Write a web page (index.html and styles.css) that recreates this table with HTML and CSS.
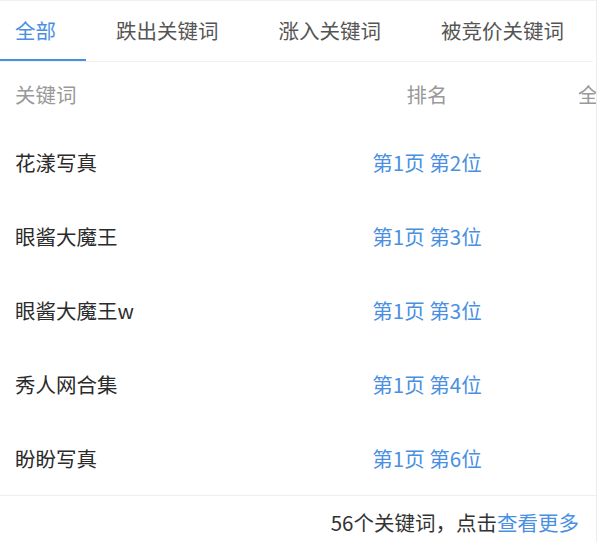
FILE: index.html
```html
<!DOCTYPE html>
<html lang="zh-CN">
<head>
    <meta charset="UTF-8">
    <title>关键词排名</title>
    <link rel="stylesheet" href="styles.css">
</head>
<body>
    <div class="panel">
        <div class="tabs">
            <div class="tab active">全部</div>
            <div class="tab">跌出关键词</div>
            <div class="tab">涨入关键词</div>
            <div class="tab">被竞价关键词</div>
        </div>

        <div class="table">
            <div class="row head">
                <div class="cell kw">关键词</div>
                <div class="cell rank">排名</div>
                <div class="cell extra">全网指数</div>
            </div>
            <div class="row">
                <div class="cell kw">花漾写真</div>
                <div class="cell rank link">第1页 第2位</div>
                <div class="cell extra"></div>
            </div>
            <div class="row">
                <div class="cell kw">眼酱大魔王</div>
                <div class="cell rank link">第1页 第3位</div>
                <div class="cell extra"></div>
            </div>
            <div class="row">
                <div class="cell kw">眼酱大魔王w</div>
                <div class="cell rank link">第1页 第3位</div>
                <div class="cell extra"></div>
            </div>
            <div class="row">
                <div class="cell kw">秀人网合集</div>
                <div class="cell rank link">第1页 第4位</div>
                <div class="cell extra"></div>
            </div>
            <div class="row">
                <div class="cell kw">盼盼写真</div>
                <div class="cell rank link">第1页 第6位</div>
                <div class="cell extra"></div>
            </div>
        </div>

        <div class="footer">
            56个关键词，点击<a class="more" href="#">查看更多</a>
        </div>
    </div>
</body>
</html>
```

FILE: styles.css
```css
* {
    margin: 0;
    padding: 0;
    box-sizing: border-box;
}

body {
    font-family: "Noto Sans CJK SC", "Noto Sans", sans-serif;
    font-size: 20.5px;
    background: #fff;
    color: #2b2b2b;
}

.panel {
    width: 597px;
    height: 542px;
    border-top: 1px solid #f0f0f0;
    border-right: 1px solid #ececec;
    overflow: hidden;
}

.tabs {
    display: flex;
    gap: 15px;
    height: 61px;
    border-bottom: 1px solid #f0f0f0;
    margin-right: 3px;
}

.tab {
    flex-shrink: 0;
    white-space: nowrap;
    padding: 0 30px 0 15px;
    line-height: 58px;
    color: #555;
    border-bottom: 2px solid transparent;
}

.tab:last-child {
    padding-right: 0;
}

.tab.active {
    color: #4a90e2;
    border-bottom-color: #4a90e2;
}

.table {
    width: 800px;
}

.row {
    display: grid;
    grid-template-columns: 356px 142px 1fr;
    align-items: center;
    height: 74px;
    white-space: nowrap;
}

.row.head {
    height: 63px;
    color: #999;
}

.cell.kw {
    padding-left: 15px;
}

.cell.rank {
    text-align: center;
}

.cell.extra {
    padding-left: 80px;
}

.link {
    color: #4a90e2;
}

.footer {
    border-top: 1px solid #eeeeee;
    height: 49px;
    padding: 14px 17px 0 0;
    text-align: right;
    line-height: 24px;
    color: #333;
}

.more {
    color: #4a90e2;
    text-decoration: none;
}
```
